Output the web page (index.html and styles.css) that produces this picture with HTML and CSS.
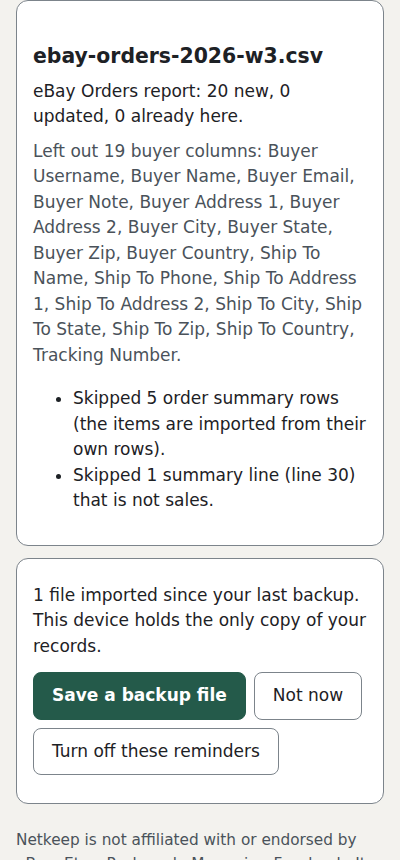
FILE: index.html
```html
<!DOCTYPE html>
<html lang="en">
<head>
    <meta charset="UTF-8">
    <meta name="viewport" content="width=device-width, initial-scale=1.0">
    <title>Netkeep - Import</title>
    <link rel="stylesheet" href="styles.css">
</head>
<body>
    <main class="page">
        <section class="card import-result">
            <h2 class="file-name">ebay-orders-2026-w3.csv</h2>
            <p class="summary">eBay Orders report: 20 new, 0 updated, 0 already here.</p>
            <p class="note">Left out 19 buyer columns: Buyer Username, Buyer Name, Buyer Email, Buyer Note, Buyer Address 1, Buyer Address 2, Buyer City, Buyer State, Buyer Zip, Buyer Country, Ship To Name, Ship To Phone, Ship To Address 1, Ship To Address 2, Ship To City, Ship To State, Ship To Zip, Ship To Country, Tracking Number.</p>
            <ul class="skipped">
                <li>Skipped 5 order summary rows (the items are imported from their own rows).</li>
                <li>Skipped 1 summary line (line 30) that is not sales.</li>
            </ul>
        </section>

        <section class="card backup-nudge">
            <p>1 file imported since your last backup. This device holds the only copy of your records.</p>
            <div class="actions">
                <button class="btn btn-primary">Save a backup file</button>
                <button class="btn">Not now</button>
                <button class="btn">Turn off these reminders</button>
            </div>
        </section>

        <footer class="disclaimer">
            Netkeep is not affiliated with or endorsed by eBay, Etsy, Poshmark, Mercari or Facebook. It only reads the files you choose to import.
        </footer>
    </main>
</body>
</html>
```

FILE: styles.css
```css
:root {
    --page-bg: #f3f2ee;
    --card-bg: #ffffff;
    --border: #7c848b;
    --text: #1d2125;
    --muted: #4a525a;
    --primary: #245a4a;
    --radius: 12px;
}

* {
    box-sizing: border-box;
}

body {
    margin: 0;
    background: var(--page-bg);
    color: var(--text);
    font-family: "DejaVu Sans", Verdana, sans-serif;
    font-size: 17px;
    line-height: 1.5;
}

.page {
    padding: 0 16px;
}

.card {
    background: var(--card-bg);
    border: 1px solid var(--border);
    border-radius: var(--radius);
    padding: 24px 16px;
    margin-bottom: 12px;
}

.card p {
    margin: 0;
}

.file-name {
    margin: 18px 0 9px;
    font-size: 1.2em;
    line-height: 1.3;
}

.note {
    color: var(--muted);
    margin-top: 9px !important;
}

.skipped {
    margin: 18px 0 7px;
    padding-left: 40px;
}

.backup-nudge .actions {
    display: flex;
    flex-wrap: wrap;
    gap: 8px;
    margin-top: 13px;
    padding-bottom: 4px;
}

.btn {
    font-family: inherit;
    font-size: 17px;
    line-height: 1.5;
    color: var(--text);
    background: var(--card-bg);
    border: 1px solid var(--border);
    border-radius: 8px;
    padding: 10px 18px;
    cursor: pointer;
}

.btn-primary {
    background: var(--primary);
    border-color: var(--primary);
    color: #fff;
    font-weight: 700;
}

.disclaimer {
    margin-top: 24px;
    color: var(--muted);
    font-size: 0.9em;
    line-height: 1.6;
}
```
